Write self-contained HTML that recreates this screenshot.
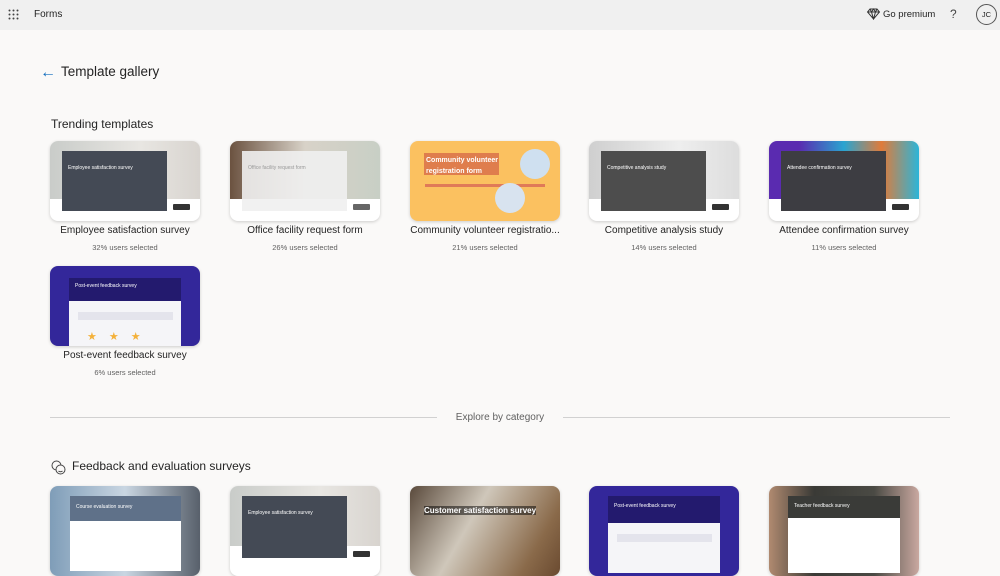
<!DOCTYPE html>
<html><head><meta charset="utf-8"><style>
*{margin:0;padding:0;box-sizing:border-box}
body{width:1000px;height:566px;overflow:hidden;background:#faf9f8;font-family:"Liberation Sans",sans-serif;color:#242424;position:relative}
.hdr{position:absolute;left:0;top:0;width:1000px;height:30px;background:#f0f0f0}
.abs{position:absolute}
.card{position:absolute;width:150px;height:80px;border-radius:8px;overflow:hidden;box-shadow:0 1px 3px rgba(0,0,0,.18);background:#fff}
.t{position:absolute;width:180px;text-align:center;font-size:10px;color:#242424}
.s{position:absolute;width:180px;text-align:center;font-size:7.5px;color:#616161}
.panel{position:absolute;left:12px;top:10px;width:105px;height:60px}
.ptitle{position:absolute;left:6px;top:14px;font-size:5px;color:#fff}
.btn{position:absolute;right:10px;top:63px;width:17px;height:6px;background:#333;border-radius:1px}
</style></head><body>
<div class="hdr">
 <svg class="abs" style="left:8px;top:9px" width="11" height="11" viewBox="0 0 11 11" fill="#444"><circle cx="1.5" cy="1.5" r="1"/><circle cx="5.5" cy="1.5" r="1"/><circle cx="9.5" cy="1.5" r="1"/><circle cx="1.5" cy="5.5" r="1"/><circle cx="5.5" cy="5.5" r="1"/><circle cx="9.5" cy="5.5" r="1"/><circle cx="1.5" cy="9.5" r="1"/><circle cx="5.5" cy="9.5" r="1"/><circle cx="9.5" cy="9.5" r="1"/></svg>
 <div class="abs" style="left:34px;top:9px;font-size:10px">Forms</div>
 <svg class="abs" style="left:867px;top:8px" width="13" height="12" viewBox="0 0 13 12" fill="none" stroke="#333" stroke-width="1"><path d="M3 1h7l2.5 3L6.5 11 .5 4z M.5 4h12 M4.5 4l2 7 2-7 M3 1l1.5 3 2-3 2 3 1.5-3"/></svg>
 <div class="abs" style="left:883px;top:9px;font-size:9.5px">Go premium</div>
 <div class="abs" style="left:950px;top:7px;font-size:12px;color:#444">?</div>
 <div class="abs" style="left:976px;top:4px;width:21px;height:21px;border:1px solid #555;border-radius:50%;font-size:7.5px;text-align:center;line-height:19px">JC</div>
</div>
<div class="abs" style="left:40px;top:64px;font-size:16px;color:#0f6cbd">←</div>
<div class="abs" style="left:61px;top:64px;font-size:13.5px">Template gallery</div>
<div class="abs" style="left:51px;top:117px;font-size:12px">Trending templates</div>

<!-- row 1 -->
<div class="card" style="left:50px;top:141px"><div style="position:absolute;inset:0 0 22px 0;background:linear-gradient(90deg,#c9ccc9,#e8e6e2 60%,#d8d4cf)"></div><div class="panel" style="background:#444a55"><div class="ptitle">Employee satisfaction survey</div></div><div class="btn"></div></div>
<div class="t" style="left:35px;top:225px">Employee satisfaction survey</div><div class="s" style="left:35px;top:243px">32% users selected</div>

<div class="card" style="left:230px;top:141px"><div style="position:absolute;inset:0 0 22px 0;background:linear-gradient(90deg,#6b5240,#d8d2c8 50%,#c8cfc5)"></div><div class="panel" style="background:rgba(240,240,240,.9)"><div class="ptitle" style="color:#999">Office facility request form</div></div><div class="btn" style="background:#666"></div></div>
<div class="t" style="left:215px;top:225px">Office facility request form</div><div class="s" style="left:215px;top:243px">26% users selected</div>

<div class="card" style="left:410px;top:141px;background:#fbc160"><div class="abs" style="left:14px;top:12px;width:75px;height:22px;background:#d9714a;opacity:.85"></div><div class="abs" style="left:16px;top:14px;font-size:7px;color:#fff;font-weight:bold;line-height:11px">Community volunteer<br>registration form</div><div class="abs" style="left:15px;top:43px;width:120px;height:3px;background:#e07a58"></div><div class="abs" style="left:110px;top:8px;width:30px;height:30px;border-radius:50%;background:#cfe0f0"></div><div class="abs" style="left:85px;top:42px;width:30px;height:30px;border-radius:50%;background:#d8e3ef"></div></div>
<div class="t" style="left:395px;top:225px">Community volunteer registratio...</div><div class="s" style="left:395px;top:243px">21% users selected</div>

<div class="card" style="left:589px;top:141px"><div style="position:absolute;inset:0 0 22px 0;background:linear-gradient(90deg,#cfcfcf,#eee 60%,#ddd)"></div><div class="panel" style="background:#4d4d4d"><div class="ptitle">Competitive analysis study</div></div><div class="btn"></div></div>
<div class="t" style="left:574px;top:225px">Competitive analysis study</div><div class="s" style="left:574px;top:243px">14% users selected</div>

<div class="card" style="left:769px;top:141px"><div style="position:absolute;inset:0 0 22px 0;background:linear-gradient(90deg,#5a2bb0 20%,#2aa4d0 50%,#e07b3a 75%,#2cb5d8)"></div><div class="panel" style="background:#3d3d42"><div class="ptitle">Attendee confirmation survey</div></div><div class="btn"></div></div>
<div class="t" style="left:754px;top:225px">Attendee confirmation survey</div><div class="s" style="left:754px;top:243px">11% users selected</div>

<!-- row 2 -->
<div class="card" style="left:50px;top:266px;background:#33279a"><div class="abs" style="left:19px;top:12px;width:112px;height:23px;background:#231a6e"><div class="ptitle" style="top:5px">Post-event feedback survey</div></div><div class="abs" style="left:19px;top:35px;width:112px;height:45px;background:#f5f5f8"><div class="abs" style="left:9px;top:11px;width:95px;height:8px;background:#e4e4ec"></div><div class="abs" style="left:18px;top:29px;font-size:11px;color:#f4b13a;letter-spacing:12px">★★★</div></div></div>
<div class="t" style="left:35px;top:350px">Post-event feedback survey</div><div class="s" style="left:35px;top:368px">6% users selected</div>

<div class="abs" style="left:50px;top:417px;width:387px;height:1px;background:#d1d1d1"></div>
<div class="abs" style="left:563px;top:417px;width:387px;height:1px;background:#d1d1d1"></div>
<div class="abs" style="left:437px;top:412px;width:126px;text-align:center;font-size:10px;color:#616161">Explore by category</div>

<svg class="abs" style="left:51px;top:460px" width="15" height="15" viewBox="0 0 15 15" fill="none" stroke="#444" stroke-width="1"><circle cx="5.5" cy="5.5" r="4.5"/><circle cx="9.5" cy="9.5" r="4.5" fill="#faf9f8"/><path d="M7.5 11c1 1 3 1 4 0"/></svg>
<div class="abs" style="left:72px;top:459px;font-size:12px">Feedback and evaluation surveys</div>

<div class="card" style="left:50px;top:486px;height:90px;background:linear-gradient(90deg,#7f9db8,#c9d6e2 50%,#58606b)"><div class="abs" style="left:20px;top:10px;width:111px;height:25px;background:#5f7189"><div class="ptitle" style="top:8px">Course evaluation survey</div></div><div class="abs" style="left:20px;top:35px;width:111px;height:50px;background:#fff"></div></div>
<div class="card" style="left:230px;top:486px;height:90px"><div style="position:absolute;inset:0 0 30px 0;background:linear-gradient(90deg,#c9ccc9,#e8e6e2 60%,#d8d4cf)"></div><div class="abs" style="left:12px;top:10px;width:105px;height:62px;background:#444a55"><div class="ptitle">Employee satisfaction survey</div></div><div class="btn" style="top:65px"></div></div>
<div class="card" style="left:410px;top:486px;height:90px;background:linear-gradient(120deg,#5a4a3c,#cfc7ba 40%,#8a6a4a 80%,#6a4a30)"><div class="abs" style="left:14px;top:20px;font-size:8px;color:#fff;font-weight:bold;background:rgba(0,0,0,.5)">Customer satisfaction survey</div></div>
<div class="card" style="left:589px;top:486px;height:90px;background:#33279a"><div class="abs" style="left:19px;top:10px;width:112px;height:27px;background:#231a6e"><div class="ptitle" style="top:7px">Post-event feedback survey</div></div><div class="abs" style="left:19px;top:37px;width:112px;height:50px;background:#f5f5f8"><div class="abs" style="left:9px;top:11px;width:95px;height:8px;background:#e4e4ec"></div></div></div>
<div class="card" style="left:769px;top:486px;height:90px;background:linear-gradient(90deg,#b08a70,#3a3a36 30%,#4a4a44 70%,#c9a8a0)"><div class="abs" style="left:19px;top:10px;width:112px;height:22px;background:#3a3b38"><div class="ptitle" style="top:7px">Teacher feedback survey</div></div><div class="abs" style="left:19px;top:32px;width:112px;height:55px;background:#fff"></div></div>
</body></html>
